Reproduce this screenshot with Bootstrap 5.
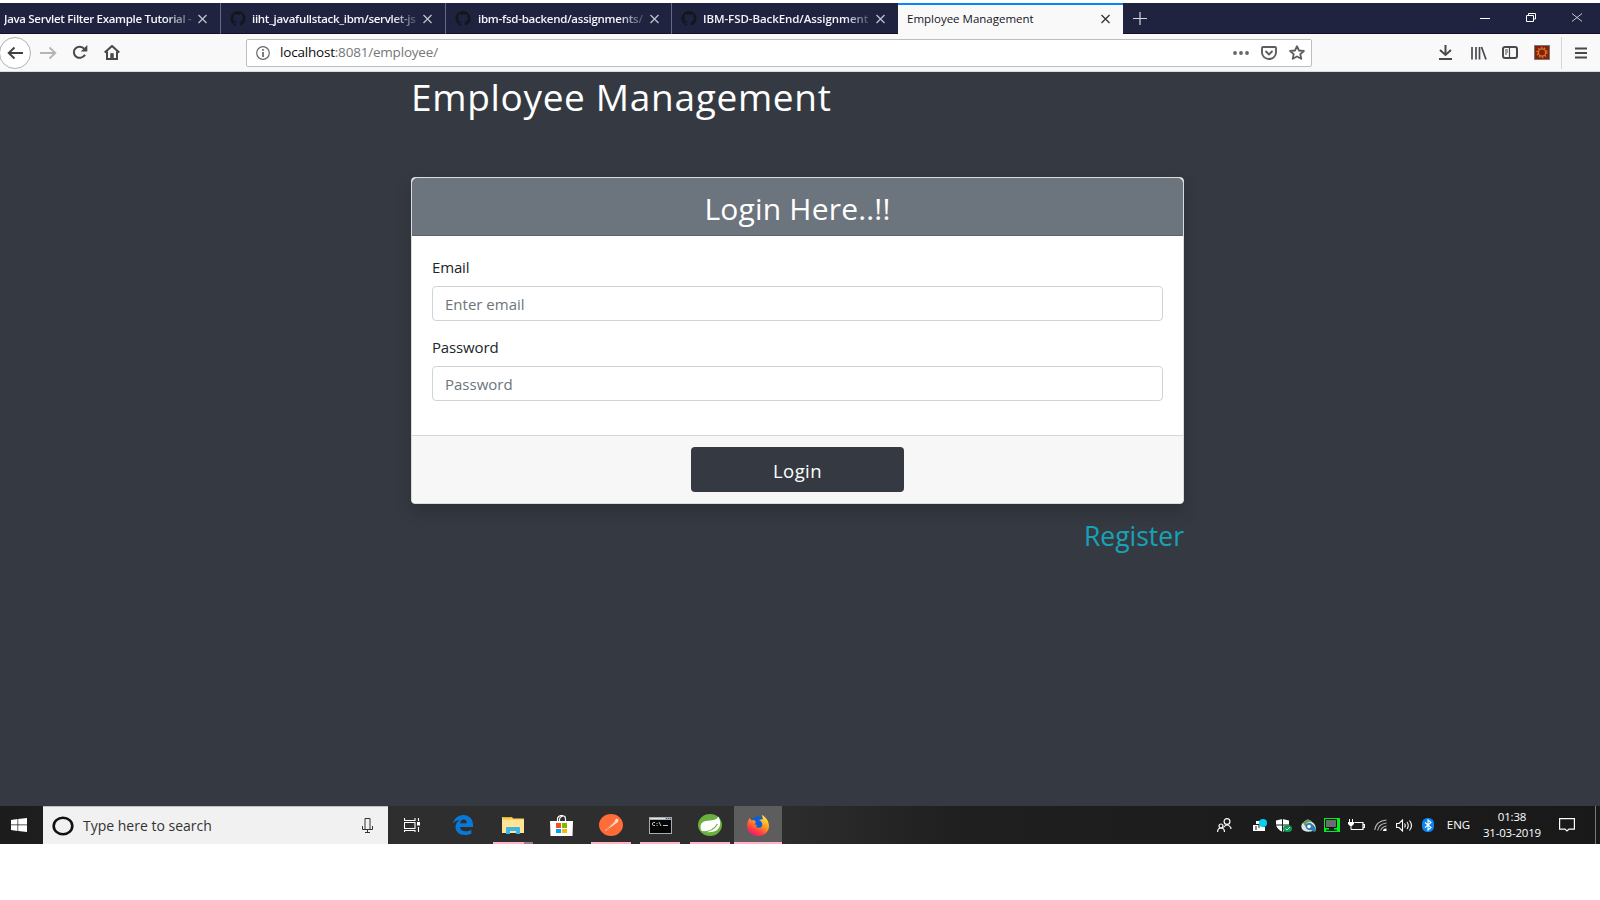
<!DOCTYPE html>
<html lang="en">
<head>
<meta charset="utf-8">
<title>Employee Management</title>
<link href="https://cdn.jsdelivr.net/npm/bootstrap@5.3.0/dist/css/bootstrap.min.css" rel="stylesheet">
<style>
body{font-family:"Open Sans","Noto Sans",sans-serif;background:#fff;width:1600px;height:900px;overflow:hidden;padding-top:3px}
svg{display:block;flex:none}
.tabstrip{height:31px;background:#202340;border-bottom:1px solid #14112a}
.tab{width:226px;height:31px;border-left:1px solid #666880;color:#f4f4fa;font-size:11.5px;font-weight:600;padding-left:9px}
.tab.first{width:220px;border-left:0;padding-left:4px}
.tab.current{width:225px;background:#f9f9fa;color:#15141a;border-left:0;border-top:2px solid #0a84ff;font-weight:400;padding-left:9px}
.tab .ttl{height:17px;line-height:17px;white-space:nowrap}
.tab .cut{-webkit-mask-image:linear-gradient(90deg,#000 85%,rgba(0,0,0,.15));mask-image:linear-gradient(90deg,#000 85%,rgba(0,0,0,.15))}
.winbtn{width:46px}
.toolbar{height:38px;background:#f9f9fa;border-bottom:1px solid #dcdce0;position:relative}
.back{width:32px;height:32px;border:1px solid #b1b1b5;border-radius:50%;background:#fff;margin-left:-1px}
.urlbar{width:1066px;height:28px;border:1px solid #bebec2;border-radius:2px;background:#fff;font-size:13.5px;letter-spacing:-.2px}
.page{height:734px;background:#353a42}
.wrap{width:773px;margin-left:411px}
.head1{font-size:37px;line-height:46px;color:#fff;font-weight:400;letter-spacing:.68px;padding-top:2px}
.login{border:1px solid #d9dbdd;border-radius:4px;box-shadow:0 8px 16px rgba(0,0,0,.18);height:327px;margin-top:57px}
.login .card-header{height:58px;background:#6c747d;border-bottom:1px solid #5b6269;color:#fff}
.login .card-header h2{font-size:30px;font-weight:400;line-height:38px;letter-spacing:.2px}
.login label{font-size:15px;line-height:22px;color:#212529;letter-spacing:-.15px}
.login .form-control{height:34.5px;font-size:15px;border:1px solid #ced4da;border-radius:4px;padding:1px 12px 0}
.login .form-control::placeholder{color:#6c757d;opacity:1}
.login .card-footer{height:68px;background:#f7f7f7;border-top:1px solid #d6d7d7}
.btn-login{width:213px;height:45px;background:#353a42;color:#fff;border:0;border-radius:4px;font-size:18.5px;letter-spacing:.4px;padding:3px 0 0}
.reg{color:#17a2b8;font-size:26.5px;line-height:34px;text-decoration:none}
.taskbar{height:38px;background:linear-gradient(90deg,#1c1c1c 0,#2e2e2e 25%,#2e2e2e 48%,#1f1f1f 60%,#191919 100%);color:#fff}
.search{width:345px;background:#f1f1f1;border-top:1px solid #c2c2c2;font-size:14px;color:#333}
.app{width:49.2px;height:38px;position:relative}
.app.run::after,.app.on::after{content:"";position:absolute;left:4.600px;right:4.600px;bottom:0;height:2px;background:#ffb3c6}
.app.multi::after{background:linear-gradient(90deg,#ffb3c6 31px,#a97888 31px)}
.app.on{background:#5d5d5d;width:48px}
.app.on::after{left:0;right:0}
.tray>div{width:24px}
.tray .lang{width:37px;font-size:11.5px}
.tray .clock{width:70px;font-size:11.5px;line-height:16px;letter-spacing:-.2px}
</style>
</head>
<body>
<svg width="0" height="0" style="position:absolute">
<symbol id="x" viewBox="0 0 10 10"><path d="M1 1l8 8M9 1l-8 8" fill="none" stroke="currentColor" stroke-width="1.3"/></symbol>
<symbol id="gh" viewBox="0 0 16 16"><path fill="#15151c" d="M8 0C3.58 0 0 3.58 0 8c0 3.54 2.29 6.53 5.47 7.59.4.07.55-.17.55-.38 0-.19-.01-.82-.01-1.49-2.01.37-2.53-.49-2.69-.94-.09-.23-.48-.94-.82-1.13-.28-.15-.68-.52-.01-.53.63-.01 1.08.58 1.23.82.72 1.21 1.87.87 2.33.66.07-.52.28-.87.51-1.07-1.78-.2-3.64-.89-3.64-3.95 0-.87.31-1.59.82-2.15-.08-.2-.36-1.02.08-2.12 0 0 .67-.21 2.2.82a7.6 7.6 0 0 1 4 0c1.53-1.04 2.2-.82 2.2-.82.44 1.1.16 1.92.08 2.12.51.56.82 1.27.82 2.15 0 3.07-1.87 3.75-3.65 3.95.29.25.54.73.54 1.48 0 1.07-.01 1.93-.01 2.2 0 .21.15.46.55.38A8 8 0 0 0 16 8c0-4.42-3.58-8-8-8z"/></symbol>
</svg>
<div class="tabstrip d-flex">
  <div class="tab first d-flex align-items-center"><div class="ttl cut" style="width:190px;letter-spacing:-.32px">Java Servlet Filter Example Tutorial -</div><svg class="ms-auto" style="margin-right:12px" width="11" height="10" color="#c0c0cc"><use href="#x"/></svg></div>
  <div class="tab d-flex align-items-center" style="width:225px"><svg width="16" height="15"><use href="#gh"/></svg><div class="ttl cut" style="width:165px;margin-left:6px;letter-spacing:-.31px">iiht_javafullstack_ibm/servlet-js</div><svg class="ms-auto" style="margin-right:12px" width="11" height="10" color="#c0c0cc"><use href="#x"/></svg></div>
  <div class="tab d-flex align-items-center"><svg width="16" height="15"><use href="#gh"/></svg><div class="ttl cut" style="width:166px;margin-left:7px;letter-spacing:-.25px">ibm-fsd-backend/assignments/</div><svg class="ms-auto" style="margin-right:11px" width="11" height="10" color="#c0c0cc"><use href="#x"/></svg></div>
  <div class="tab d-flex align-items-center" style="width:227px"><svg width="16" height="15"><use href="#gh"/></svg><div class="ttl cut" style="width:167px;margin-left:6px;letter-spacing:-.07px">IBM-FSD-BackEnd/Assignment</div><svg class="ms-auto" style="margin-right:12px" width="11" height="10" color="#c0c0cc"><use href="#x"/></svg></div>
  <div class="tab current d-flex align-items-center"><div class="ttl" style="margin-top:-2px">Employee Management</div><svg class="ms-auto" style="margin:-2px 12px 0 0" width="11" height="10" color="#333"><use href="#x"/></svg></div>
  <div class="d-flex align-items-center" style="padding-left:10px"><svg width="14" height="13" viewBox="0 0 14 13"><path d="M0 6.5h14M7 0v13" stroke="#d4d4de" stroke-width="1.2"/></svg></div>
  <div class="ms-auto d-flex align-items-center" style="height:29px">
    <div class="winbtn d-flex justify-content-center"><svg width="10" height="10"><path d="M0 5.5h10" stroke="#fff"/></svg></div>
    <div class="winbtn d-flex justify-content-center"><svg width="10" height="9"><path d="M.5 2.5h7v6h-7zM2.5 2.5v-2h7v5.5h-2" fill="none" stroke="#fff"/></svg></div>
    <div class="winbtn d-flex justify-content-center"><svg width="10" height="9" viewBox="0 0 10 9"><path d="M0 .5l10 8M10 .5l-10 8" stroke="#ddd" stroke-width=".9"/></svg></div>
  </div>
</div>
<div class="toolbar d-flex align-items-center">
  <div class="back d-flex align-items-center justify-content-center"><svg width="17" height="14" viewBox="0 0 17 14"><path d="M16 7H2M7.5 1.500L1.700 7l5.800 5.500" fill="none" stroke="#3f3f44" stroke-width="1.900"/></svg></div>
  <svg style="margin-left:9px" width="17" height="14" viewBox="0 0 17 14"><path d="M0 7h15M9.5 1.500l5.800 5.500-5.800 5.500" fill="none" stroke="#b4b4b8" stroke-width="1.800"/></svg>
  <svg style="margin-left:15px" width="16" height="15" viewBox="0 0 16 15"><path d="M13 9.800A5.900 5.500 0 1 1 12.300 3.800" fill="none" stroke="#48484d" stroke-width="2"/><path d="M15.300 0v6.500H8.800z" fill="#48484d"/></svg>
  <svg style="margin-left:16px" width="16" height="15" viewBox="0 0 16 15"><path d="M.7 7.600L8 1l7.300 6.600M3 6.500V14h10V6.500" fill="none" stroke="#48484d" stroke-width="2"/><path d="M6.300 14V8.200h3.400V14z" fill="#48484d"/></svg>
  <div class="urlbar d-flex align-items-center" style="margin-left:126px">
    <svg style="margin-left:9px" width="14" height="14" viewBox="0 0 14 14"><circle cx="7" cy="7" r="6.3" fill="none" stroke="#67676b" stroke-width="1.2"/><path d="M7 3v1.800M7 6v5" stroke="#67676b" stroke-width="1.7"/></svg>
    <div style="margin-left:10px;color:#76767a;white-space:nowrap"><span style="color:#0c0c0d">localhost</span>:8081/employee/</div>
    <svg class="ms-auto" width="16" height="4"><g fill="#666"><circle cx="2" cy="2" r="1.9"/><circle cx="8" cy="2" r="1.9"/><circle cx="14" cy="2" r="1.9"/></g></svg>
    <svg style="margin-left:12px" width="16" height="14" viewBox="0 0 16 14"><path d="M2 1h12a1 1 0 0 1 1 1v4.500a7 6.500 0 0 1-14 0V2a1 1 0 0 1 1-1z" fill="none" stroke="#5d5d61" stroke-width="1.9"/><path d="M4.500 5l3.500 3.500L11.500 5" fill="none" stroke="#5d5d61" stroke-width="1.9"/></svg>
    <svg style="margin:0 6px 0 12px" width="16" height="15" viewBox="0 0 16 15"><path d="M8 1.200l2 4.300 4.900.5-3.600 3.200 1 4.600L8 11.500l-4.300 2.300 1-4.600L1.100 6 6 5.500z" fill="none" stroke="#5d5d61" stroke-width="1.8" stroke-linejoin="round"/></svg>
  </div>
  <svg style="margin-left:127px" width="13" height="15" viewBox="0 0 13 15"><path d="M6.500 0v10M1 5l5.500 5L12 5M0 14h13" fill="none" stroke="#48484d" stroke-width="2"/></svg>
  <svg style="margin-left:19px" width="16" height="14" viewBox="0 0 16 14"><path d="M1 1v12.500M5 1v12.500M8.500 1v12.500M10.500 1l4.500 12.500" fill="none" stroke="#48484d" stroke-width="1.7"/></svg>
  <svg style="margin-left:15px" width="16" height="13" viewBox="0 0 16 13"><rect x="1" y="1" width="14" height="11" rx="2" fill="none" stroke="#48484d" stroke-width="2"/><path d="M7.500 1v11M3 4h3M3 6h3M3 8h2" stroke="#48484d" stroke-width="1.2"/></svg>
  <svg style="margin-left:16px" width="16" height="15" viewBox="0 0 16 15"><path d="M.5.500h15v14H.5z" fill="#8d1c0b" stroke="#777"/><circle cx="8" cy="7.500" r="4.900" fill="none" stroke="#c98325" stroke-width="1.600" stroke-dasharray="1.300 1.780"/><circle cx="8" cy="7.500" r="3.600" fill="#8d1c0b" stroke="#c98325" stroke-width="1.200"/></svg>
  <div style="width:1px;height:32px;background:#d5d5d9;margin-left:11px"></div>
  <svg style="margin-left:13px" width="12" height="12"><path d="M0 1.500h12M0 6h12M0 10.500h12" stroke="#48484d" stroke-width="1.8"/></svg>
</div>
<main class="page">
  <div class="wrap">
    <h1 class="head1 mb-0">Employee Management</h1>
    <div class="card login">
      <div class="card-header text-center p-0 pt-2"><h2 class="m-0 pt-1">Login Here..!!</h2></div>
      <div class="card-body" style="padding:20px 20px 0">
        <label class="d-block" for="em" style="margin-bottom:8px">Email</label>
        <input id="em" class="form-control" type="email" placeholder="Enter email">
        <label class="d-block" for="pw" style="margin:15.5px 0 8px">Password</label>
        <input id="pw" class="form-control" type="password" placeholder="Password">
      </div>
      <div class="card-footer text-center p-0" style="padding-top:11px!important"><button class="btn btn-login">Login</button></div>
    </div>
    <div class="text-end" style="margin-top:15px"><a class="reg" href="#">Register</a></div>
  </div>
</main>
<footer class="taskbar d-flex">
  <div class="d-flex align-items-center" style="width:43px;padding-left:11px"><svg width="16" height="14" viewBox="0 0 16 14"><path fill="#fff" d="M0 2l6.500-1v5.500H0zM7.200.9L16 0v6.500H7.200zM0 7.300h6.500V13L0 12zM7.200 7.300H16V14l-8.800-.9z"/></svg></div>
  <div class="search d-flex align-items-center">
    <svg style="margin-left:9px" width="22" height="20" viewBox="0 0 22 20"><ellipse cx="11" cy="10" rx="9.300" ry="8.300" fill="none" stroke="#111" stroke-width="2.6"/></svg>
    <div style="margin-left:9px">Type here to search</div>
    <svg class="ms-auto" style="margin-right:15px" width="11" height="15" viewBox="0 0 11 15"><path d="M3 .5h5v11H3zM.5 8v3.500h2.500M10.500 8v3.500H8M5.500 12v2.500M3 14.500h5" fill="none" stroke="#333" stroke-width="1"/></svg>
  </div>
  <div class="d-flex align-items-center justify-content-center" style="width:51px;padding-right:3px"><svg width="17" height="14" viewBox="0 0 17 14"><path d="M.5 0v2.500h10.500V0M.5 4.500h10.500v6H.5zM.5 14v-1.500h10.500V14M14.500 0v3M14.500 9v5" fill="none" stroke="#fff" stroke-width="1.1"/><path d="M13 4h3v3.500h-3z" fill="#fff"/></svg></div>
  <div class="app d-flex align-items-center justify-content-center"><svg style="margin-right:1px" width="20" height="20" viewBox="0 0 20 20"><path fill="#0a78d7" d="M0 9C1 3.500 5 0 10.300 0 16.500 0 20 4.500 20 9.500V12H7c.2 3 2.500 4.300 5.600 4.300 2.200 0 4-.5 5.700-1.500v3.900C16.500 19.600 14.200 20 12 20 6 20 2.500 16.500 2.500 12c0-3.200 1.800-5.800 4.500-7.200C4 5 1.500 6.500 0 9zm7.200-.8h6.600c0-2.400-1.200-3.700-3.200-3.700-1.900 0-3.100 1.400-3.400 3.700z"/></svg></div>
  <div class="app run multi d-flex align-items-center justify-content-center"><svg width="22" height="17" viewBox="0 0 22 17"><path d="M0 0h10l1 1.500h11V16H0z" fill="#fbd66b"/><path d="M1 0h8l1 1.300H1z" fill="#e8ab1d"/><path d="M0 3h22v13H0z" fill="#ffe594"/><path d="M4 17V11q0-1 1-1h12q1 0 1 1v6h-4v-3H8v3z" fill="#3db5e6"/></svg></div>
  <div class="app d-flex align-items-center justify-content-center"><svg width="23" height="21" viewBox="0 0 23 21"><path d="M7.500 7V4a4 3.500 0 0 1 8 0v3M9.500 7V4.500a4 3.500 0 0 1 6-3" fill="none" stroke="#fff" stroke-width="1.2"/><path fill="#fff" d="M0 6h23l-.5 15H.5z"/><path fill="#f25022" d="M6 8h5v5H6z"/><path fill="#7fba00" d="M12 8h5v5h-5z"/><path fill="#00a4ef" d="M6 14h5v4H6z"/><path fill="#ffb900" d="M12 14h5v4h-5z"/></svg></div>
  <div class="app run d-flex align-items-center justify-content-center"><svg width="24" height="22" viewBox="0 0 24 22"><ellipse cx="12" cy="11" rx="12" ry="11" fill="#ff6c37"/><path d="M5.500 17l5-5 4-4 3-3.500 2 1-.5 2.500-5.500 4-4 2.500-2.500 2z" fill="#ffd7c5"/><path d="M8 15l8-8" stroke="#d9683f" stroke-width=".7"/></svg></div>
  <div class="app run d-flex align-items-center justify-content-center"><svg width="23" height="17" viewBox="0 0 23 17"><path d="M0 0h23v17H0z" fill="#a9adb2"/><path d="M1 3h21v13H1z" fill="#050505"/><path d="M1 1h15v1H1z" fill="#dfe3e6"/><path d="M17 1h1v1h-1zM19 1h1v1h-1zM21 1h1v1h-1z" fill="#355a80"/><path d="M6 5.500H4.500q-1 0-1 1.500t1 1.500H6M8 6v1M8 8v1M10 5l2 4M14 8.500h5" fill="none" stroke="#ddd" stroke-width=".9"/></svg></div>
  <div class="app run d-flex align-items-center justify-content-center"><svg width="24" height="22" viewBox="0 0 24 22"><ellipse cx="12" cy="11" rx="12" ry="11" fill="#69b03f"/><path d="M3 16C1 8 6 7 12 6.500 17 6 19 5 20.500 2.500 24 9 22 16 16 17.500c-4 1-8 .8-11.500-.3z" fill="#fff"/><path d="M4 18c6 0 12-2 15.500-8" fill="none" stroke="#69b03f" stroke-width="1.2"/></svg></div>
  <div class="app on d-flex align-items-center justify-content-center"><svg width="22" height="21" viewBox="0 0 22 21"><defs><linearGradient id="ff" x1=".8" y1="0" x2=".2" y2="1"><stop offset="0" stop-color="#fff04a"/><stop offset=".4" stop-color="#ff9a1f"/><stop offset=".75" stop-color="#ff3647"/><stop offset="1" stop-color="#e31587"/></linearGradient></defs><circle cx="11" cy="9" r="7.500" fill="#0a5fd8"/><path fill="url(#ff)" d="M2.500 3l2 2.500L7 5l2 2-1.500 2.500 2.500.5-1 1.500c1.500 2 4.500 1.800 6-.5 1-3-1-5-3-6L16 4l-1-4c4 2 7 6.500 7 11 0 6-5 10-11 10S0 16.500 0 11c0-3 1-5 2.500-8z"/></svg></div>
  <div class="tray ms-auto d-flex align-items-center">
    <div class="d-flex justify-content-center" style="margin-right:12px"><svg width="15" height="14" viewBox="0 0 15 14"><g fill="none" stroke="#fff" stroke-width="1.2"><circle cx="10" cy="3.500" r="2.900"/><path d="M6.500 9.500q3.500-5 7.300 0v1.500"/><circle cx="4" cy="8" r="2"/><path d="M.6 14q0-4 3.400-4t3.500 4"/></g></svg></div>
    <div class="d-flex justify-content-center"><svg width="14" height="13" viewBox="0 0 14 13"><path fill="#fff" d="M3 2h4v3H3zM0 6h9v6H0zM9 8h3v4H9z"/><path d="M3 7v4M6 6v3" stroke="#1c1c1c"/><circle cx="10" cy="4" r="4" fill="#00d1f2"/></svg></div>
    <div class="d-flex justify-content-center"><svg width="16" height="13" viewBox="0 0 16 13"><path fill="#fff" d="M0 1.500L6.500 0 13 1.500V6q-1 4-6.500 7Q1 10 0 6z"/><path d="M6.500 0v13M0 6h13" stroke="#1c1c1c"/><ellipse cx="11.500" cy="9.500" rx="4.500" ry="3.500" fill="#129b58"/><path d="M9.500 9.500l1.500 1.500 3-3" fill="none" stroke="#fff" stroke-width=".8"/></svg></div>
    <div class="d-flex justify-content-center"><svg width="15" height="13" viewBox="0 0 15 13"><path d="M1 10Q-1 5 3 3 7-2 11 3q4 2 4 8 0 2-3 1Q4 14 1 10z" fill="#dce8e6"/><path d="M2 4Q6-2 11 3 6 2 4 7z" fill="#6f9c56"/><path d="M4 6q4-4 7-1 4 3 4 7-3 1-5-1-5 1-6-5z" fill="#2d7fb0"/><circle cx="8" cy="7.500" r="1.800" fill="#fff"/></svg></div>
    <div class="d-flex justify-content-center"><svg width="16" height="14" viewBox="0 0 16 14"><path d="M0 0h16v14H0z" fill="#00f01c"/><path d="M1.500 1.500h11v8h-11z" fill="#6a6e6a" stroke="#111"/><path d="M5 10h5v1.500h3V13H2v-1.500h3z" fill="#123"/></svg></div>
    <div class="d-flex justify-content-center"><svg width="17" height="12" viewBox="0 0 17 12"><path d="M6.500 3.500h8.500v7H5M15.500 5.500h1v3h-1" fill="none" stroke="#fff" stroke-width="1.2"/><path d="M1.500 0v3M4.500 0v3M3 6v4.500h3" stroke="#fff" fill="none"/><path d="M0 3h6v2L4 7H2L0 5z" fill="#fff"/></svg></div>
    <div class="d-flex justify-content-center"><svg width="13" height="12" viewBox="0 0 13 12"><g fill="none" stroke="#bbb" stroke-width="1.1"><path d="M.7 11Q2 2 12.500 1M3.700 11.500Q4.500 5 12.500 4M6.700 11.500Q7.500 8 12.500 7"/></g><path d="M9 12q0-3 3.500-2.500V12z" fill="#fff"/></svg></div>
    <div class="d-flex justify-content-center"><svg width="17" height="13" viewBox="0 0 17 13"><path d="M.6 4.500H3L6.500 1v11L3 8.500H.6zM8.500 4.500q1.500 2 0 4M11 3q2.500 3.500 0 7M13.500 1.500q4 5 0 10" fill="none" stroke="#fff" stroke-width="1.1"/></svg></div>
    <div class="d-flex justify-content-center"><svg width="12" height="14" viewBox="0 0 12 14"><rect width="12" height="14" rx="5.500" fill="#0a84f0"/><path d="M3 4.500l6 5-3 2.500V2l3 2.500-6 5" fill="none" stroke="#fff" stroke-width="1.1"/></svg></div>
    <div class="lang text-center">ENG</div>
    <div class="clock text-center">01:38<br>31-03-2019</div>
    <div class="d-flex justify-content-center" style="width:40px"><svg width="16" height="14" viewBox="0 0 16 14"><path d="M.6.600h14.800v10.500H10L8 13l-2-1.900H.6z" fill="none" stroke="#fff" stroke-width="1.2"/></svg></div>
    <div style="width:1px;height:38px;background:#777;margin:0 4px 0 8px"></div>
  </div>
</footer>
<script src="https://cdn.jsdelivr.net/npm/bootstrap@5.3.0/dist/js/bootstrap.bundle.min.js"></script>
</body>
</html>
